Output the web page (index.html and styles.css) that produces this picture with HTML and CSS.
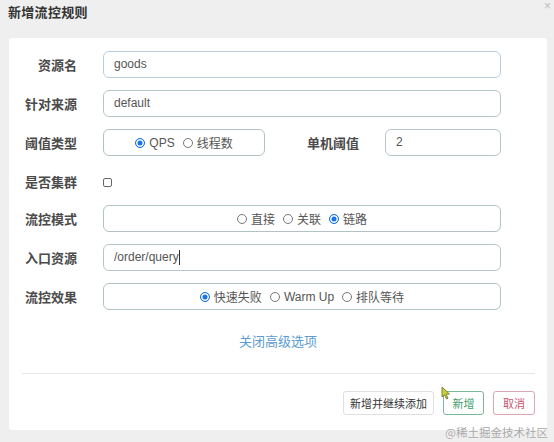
FILE: index.html
```html
<!DOCTYPE html>
<html lang="zh">
<head>
<meta charset="utf-8">
<title>新增流控规则</title>
<link rel="stylesheet" href="styles.css">
</head>
<body>
<div class="page">
  <div class="header">
    <span class="title">新增流控规则</span>
    <span class="close">×</span>
  </div>
  <div class="card">
    <div class="row">
      <label class="label">资源名</label>
      <div class="input focus">goods</div>
    </div>
    <div class="row">
      <label class="label">针对来源</label>
      <div class="input">default</div>
    </div>
    <div class="row">
      <label class="label">阈值类型</label>
      <div class="split">
        <div class="box small">
          <span class="opt"><i class="radio on"></i>QPS</span>
          <span class="opt"><i class="radio"></i>线程数</span>
        </div>
        <label class="label sub">单机阈值</label>
        <div class="input num">2</div>
      </div>
    </div>
    <div class="row">
      <label class="label">是否集群</label>
      <div><i class="check"></i></div>
    </div>
    <div class="row">
      <label class="label">流控模式</label>
      <div class="box">
        <span class="opt"><i class="radio"></i>直接</span>
        <span class="opt"><i class="radio"></i>关联</span>
        <span class="opt"><i class="radio on"></i>链路</span>
      </div>
    </div>
    <div class="row">
      <label class="label">入口资源</label>
      <div class="input">/order/query<span class="caret"></span></div>
    </div>
    <div class="row">
      <label class="label">流控效果</label>
      <div class="box">
        <span class="opt"><i class="radio on"></i>快速失败</span>
        <span class="opt"><i class="radio"></i>Warm Up</span>
        <span class="opt"><i class="radio"></i>排队等待</span>
      </div>
    </div>
    <div class="more">关闭高级选项</div>
    <div class="divider"></div>
    <div class="footer">
      <button class="btn">新增并继续添加</button>
      <button class="btn ok">新增</button>
      <button class="btn cancel">取消</button>
    </div>
  </div>
  <svg class="cursor" width="10" height="14" viewBox="0 0 10 14">
    <path d="M1 1 L1 11 L3.5 8.8 L5.5 13 L7 12.3 L5 8.2 L8.5 8 Z" fill="#c9d23c" stroke="#6b6a20" stroke-width="0.8" stroke-linejoin="round"/>
  </svg>
  <div class="watermark">@稀土掘金技术社区</div>
</div>
</body>
</html>
```
FILE: styles.css
```css
html, body {
  margin: 0;
  padding: 0;
}
body {
  background: #efefef;
  font-family: "Liberation Sans", "Noto Sans CJK SC", sans-serif;
  color: #555;
}
.page {
  position: relative;
  width: 554px;
  height: 442px;
  overflow: hidden;
}
.header {
  height: 38px;
  display: flex;
  justify-content: space-between;
  align-items: flex-start;
  padding: 0 3px 0 8px;
  box-sizing: border-box;
}
.title {
  font-size: 13px;
  font-weight: bold;
  color: #333;
  line-height: 26px;
  letter-spacing: 0.3px;
}
.close {
  font-size: 12px;
  line-height: 13px;
  color: #bbb;
}
.card {
  margin: 0 7px 0 9px;
  background: #fff;
  border-radius: 3px;
  height: 392px;
  box-sizing: border-box;
  padding-top: 13px;
}
.row {
  display: grid;
  grid-template-columns: 68px 398px;
  column-gap: 26px;
  align-items: center;
  height: 27px;
  margin-bottom: 12px;
}
.row:nth-child(4) {
  margin-bottom: 10px;
}
.label {
  text-align: right;
  font-size: 13px;
  font-weight: bold;
  color: #4a4a4a;
}
.input {
  height: 27px;
  box-sizing: border-box;
  border: 1px solid #b7c6c9;
  border-radius: 6px;
  padding: 0 10px;
  font-size: 12px;
  line-height: 25px;
  color: #555;
  display: flex;
  align-items: center;
}
.input.focus {
  border-color: #b8cde0;
}
.caret {
  display: inline-block;
  width: 1px;
  height: 15px;
  background: #333;
}
.split {
  display: flex;
  align-items: center;
}
.split .box.small {
  width: 162px;
  flex: none;
}
.label.sub {
  flex: 1;
  margin-right: 26px;
}
.input.num {
  width: 116px;
  flex: none;
}
.box {
  height: 27px;
  box-sizing: border-box;
  border: 1px solid #b2c2c5;
  border-radius: 6px;
  display: flex;
  justify-content: center;
  align-items: center;
  gap: 8px;
  font-size: 12px;
  color: #555;
}
.opt {
  display: inline-flex;
  align-items: center;
  gap: 4px;
}
.radio {
  display: inline-block;
  width: 10px;
  height: 10px;
  box-sizing: border-box;
  border: 1px solid #777;
  border-radius: 50%;
  background: #fff;
}
.radio.on {
  border: 1px solid #1a73e8;
  background: #1a73e8;
  box-shadow: inset 0 0 0 1.5px #fff;
}
.check {
  display: block;
  width: 9px;
  height: 9px;
  box-sizing: border-box;
  border: 1px solid #666;
  border-radius: 2px;
  margin-top: 2px;
}
.more {
  text-align: center;
  font-size: 13px;
  color: #5b9bd0;
  line-height: 20px;
  margin-top: 22px;
}
.divider {
  margin: 21px 12px 0 13px;
  border-top: 1px solid #e6e6e6;
}
.footer {
  display: flex;
  justify-content: flex-end;
  gap: 9px;
  padding: 17px 12px 0 0;
}
.btn {
  height: 24px;
  box-sizing: border-box;
  border: 1px solid #e0e0e0;
  border-radius: 3px;
  background: #fff;
  font-family: "Liberation Sans", "Noto Sans CJK SC", sans-serif;
  font-size: 11px;
  color: #333;
  padding: 0;
  width: 91px;
  white-space: nowrap;
}
.btn.ok {
  width: 41px;
  border-color: #79b99a;
  color: #3e9b6c;
}
.btn.cancel {
  width: 42px;
  border-color: #dca6b2;
  color: #c85470;
}
.cursor {
  position: absolute;
  left: 441px;
  top: 386px;
}
.watermark {
  position: absolute;
  right: 6px;
  top: 424px;
  font-size: 11.5px;
  line-height: 16px;
  color: #a8a8a8;
  font-family: "Noto Sans CJK SC", serif;
  text-shadow: 0 0 1px #fff;
}
```
